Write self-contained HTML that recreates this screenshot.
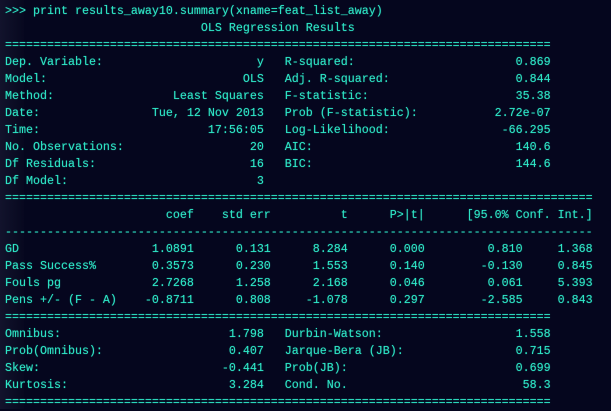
<!DOCTYPE html>
<html><head><meta charset="utf-8"><style>
html,body{margin:0;padding:0;}
body{width:611px;height:409px;overflow:hidden;background:#05061e;position:relative;}
.strip{position:absolute;left:0;top:0;width:24px;height:409px;background:linear-gradient(90deg,#12132c,#07081f);}
pre{position:absolute;left:5px;top:3px;margin:0;font-family:"Liberation Mono",monospace;font-size:11.67px;line-height:17px;color:#2ee6c6;white-space:pre;text-shadow:0 0 1px rgba(46,230,198,0.6);}
</style></head><body><div class="strip"></div><pre>&gt;&gt;&gt; print results_away10.summary(xname=feat_list_away)
                            OLS Regression Results
==============================================================================
Dep. Variable:                      y   R-squared:                       0.869
Model:                            OLS   Adj. R-squared:                  0.844
Method:                 Least Squares   F-statistic:                     35.38
Date:                Tue, 12 Nov 2013   Prob (F-statistic):           2.72e-07
Time:                        17:56:05   Log-Likelihood:                -66.295
No. Observations:                  20   AIC:                             140.6
Df Residuals:                      16   BIC:                             144.6
Df Model:                           3
====================================================================================
                       coef    std err          t      P&gt;|t|      [95.0% Conf. Int.]
------------------------------------------------------------------------------------
GD                   1.0891      0.131      8.284      0.000         0.810     1.368
Pass Success%        0.3573      0.230      1.553      0.140        -0.130     0.845
Fouls pg             2.7268      1.258      2.168      0.046         0.061     5.393
Pens +/- (F - A)    -0.8711      0.808     -1.078      0.297        -2.585     0.843
==============================================================================
Omnibus:                        1.798   Durbin-Watson:                   1.558
Prob(Omnibus):                  0.407   Jarque-Bera (JB):                0.715
Skew:                          -0.441   Prob(JB):                        0.699
Kurtosis:                       3.284   Cond. No.                         58.3
==============================================================================</pre></body></html>
